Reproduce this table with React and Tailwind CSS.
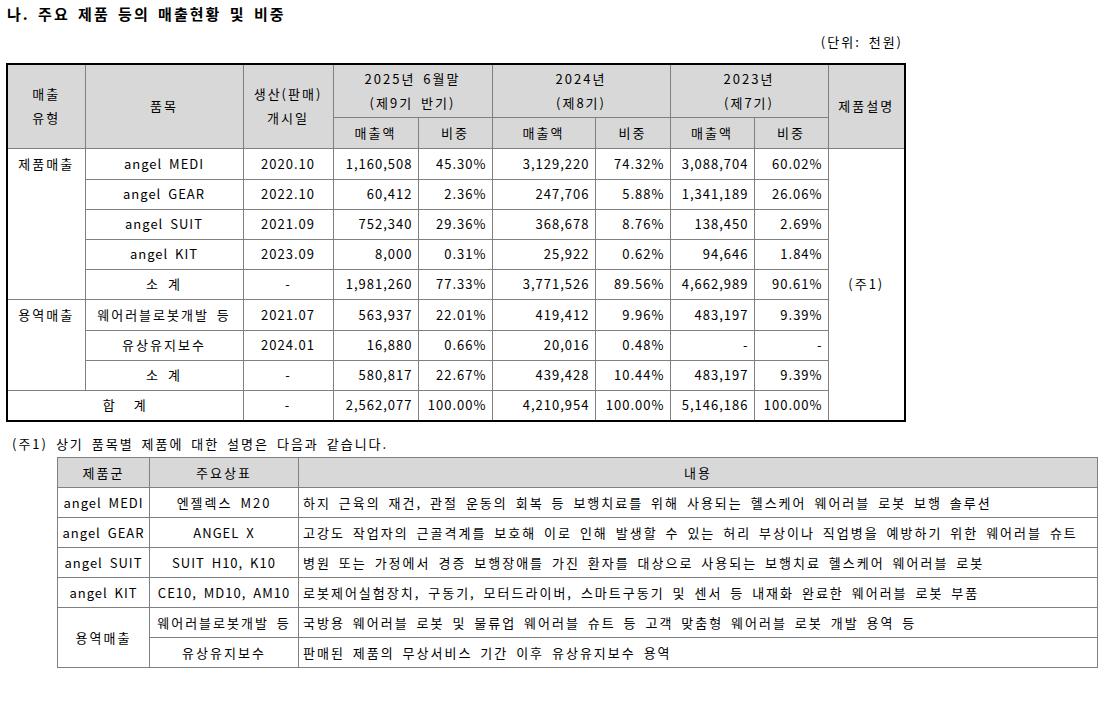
const th = 'border border-[#808080] bg-[#d8d8d8] font-normal text-center align-middle'
const td = 'border border-[#808080] align-middle'
const num = `${td} text-right pr-[5px] tracking-[1px]`
const mid = `${td} text-center`
const lat = `${td} text-center tracking-[1px]`

const rows = [
  { item: 'angel MEDI', date: '2020.10', v: ['1,160,508', '45.30%', '3,129,220', '74.32%', '3,088,704', '60.02%'] },
  { item: 'angel GEAR', date: '2022.10', v: ['60,412', '2.36%', '247,706', '5.88%', '1,341,189', '26.06%'] },
  { item: 'angel SUIT', date: '2021.09', v: ['752,340', '29.36%', '368,678', '8.76%', '138,450', '2.69%'] },
  { item: 'angel KIT', date: '2023.09', v: ['8,000', '0.31%', '25,922', '0.62%', '94,646', '1.84%'] },
  { item: '소 계', date: '-', v: ['1,981,260', '77.33%', '3,771,526', '89.56%', '4,662,989', '90.61%'], sum: true },
]

const service = [
  { item: '웨어러블로봇개발 등', date: '2021.07', v: ['563,937', '22.01%', '419,412', '9.96%', '483,197', '9.39%'] },
  { item: '유상유지보수', date: '2024.01', v: ['16,880', '0.66%', '20,016', '0.48%', '-', '-'] },
  { item: '소 계', date: '-', v: ['580,817', '22.67%', '439,428', '10.44%', '483,197', '9.39%'], sum: true },
]

const products = [
  ['angel MEDI', '엔젤렉스 M20', '하지 근육의 재건, 관절 운동의 회복 등 보행치료를 위해 사용되는 헬스케어 웨어러블 로봇 보행 솔루션'],
  ['angel GEAR', 'ANGEL X', '고강도 작업자의 근골격계를 보호해 이로 인해 발생할 수 있는 허리 부상이나 직업병을 예방하기 위한 웨어러블 슈트'],
  ['angel SUIT', 'SUIT H10, K10', '병원 또는 가정에서 경증 보행장애를 가진 환자를 대상으로 사용되는 보행치료 헬스케어 웨어러블 로봇'],
  ['angel KIT', 'CE10, MD10, AM10', '로봇제어실험장치, 구동기, 모터드라이버, 스마트구동기 및 센서 등 내재화 완료한 웨어러블 로봇 부품'],
]

const Cells = ({ v }) =>
  v.map((x, i) => (
    <td key={i} className={num}>{x}</td>
  ))

// 한글 위주 셀은 자간 2px, 숫자·영문 셀은 1px
const isLatin = (s) => /^[A-Za-z0-9 ,.]+$/.test(s)

export default function App() {
  return (
    <div className="min-h-[704px] bg-white text-black text-[13px] leading-[18px] tracking-[2px] [word-spacing:3px] font-['Noto_Sans_CJK_KR',sans-serif]">
      <h2 className="pl-[7px] pt-[4px] h-[30px] text-[15px] font-bold leading-[20px]">
        나. 주요 제품 등의 매출현황 및 비중
      </h2>

      <div className="w-[898px] ml-[6px]">
        <p className="text-right h-[33px] pt-[3px] pr-[1px]">(단위: 천원)</p>

        <table className="w-[898px] table-fixed border-collapse border-2 border-black">
          <colgroup>
            <col className="w-[78px]" />
            <col className="w-[158px]" />
            <col className="w-[90px]" />
            <col className="w-[85px]" />
            <col className="w-[74px]" />
            <col className="w-[103px]" />
            <col className="w-[75px]" />
            <col className="w-[84px]" />
            <col className="w-[74px]" />
            <col className="w-[77px]" />
          </colgroup>
          <thead>
            <tr className="h-[53px] leading-[24px]">
              <th rowSpan={2} className={th}>매출<br />유형</th>
              <th rowSpan={2} className={th}>품목</th>
              <th rowSpan={2} className={th}>생산(판매)<br />개시일</th>
              <th colSpan={2} className={th}>2025년 6월말<br />(제9기 반기)</th>
              <th colSpan={2} className={th}>2024년<br />(제8기)</th>
              <th colSpan={2} className={th}>2023년<br />(제7기)</th>
              <th rowSpan={2} className={th}>제품설명</th>
            </tr>
            <tr className="h-[31px]">
              <th className={th}>매출액</th>
              <th className={th}>비중</th>
              <th className={th}>매출액</th>
              <th className={th}>비중</th>
              <th className={th}>매출액</th>
              <th className={th}>비중</th>
            </tr>
          </thead>
          <tbody>
            {rows.map((r, i) => (
              <tr key={r.item + i} className={i === 0 ? 'h-[31px]' : 'h-[30px]'}>
                {i === 0 && (
                  <td rowSpan={5} className={`${td} align-top text-center pt-[6px]`}>제품매출</td>
                )}
                <td className={r.sum ? mid : lat}>{r.item}</td>
                <td className={lat}>{r.date}</td>
                <Cells v={r.v} />
                {i === 0 && (
                  <td rowSpan={9} className={mid}>(주1)</td>
                )}
              </tr>
            ))}
            {service.map((r, i) => (
              <tr key={r.item + i} className={i === 0 ? 'h-[31px]' : 'h-[30px]'}>
                {i === 0 && (
                  <td rowSpan={3} className={`${td} align-top text-center pt-[6px]`}>용역매출</td>
                )}
                <td className={mid}>{r.item}</td>
                <td className={lat}>{r.date}</td>
                <Cells v={r.v} />
              </tr>
            ))}
            <tr className="h-[31px]">
              <td colSpan={2} className={`${mid} [word-spacing:12px]`}>합 계</td>
              <td className={mid}>-</td>
              <Cells v={['2,562,077', '100.00%', '4,210,954', '100.00%', '5,146,186', '100.00%']} />
            </tr>
          </tbody>
        </table>
      </div>

      <p className="pl-[12px] pt-[13px] h-[35px]">(주1) 상기 품목별 제품에 대한 설명은 다음과 같습니다.</p>

      <table className="ml-[57px] w-[1040px] table-fixed border-collapse border border-black">
        <colgroup>
          <col className="w-[92px]" />
          <col className="w-[149px]" />
          <col className="w-[799px]" />
        </colgroup>
        <thead>
          <tr className="h-[30px]">
            <th className={th}>제품군</th>
            <th className={th}>주요상표</th>
            <th className={th}>내용</th>
          </tr>
        </thead>
        <tbody>
          {products.map(([a, b, c]) => (
            <tr key={a} className="h-[30px]">
              <td className={lat}>{a}</td>
              <td className={isLatin(b) ? lat : mid}>{b}</td>
              <td className={`${td} pl-[4px]`}>{c}</td>
            </tr>
          ))}
          <tr className="h-[30px]">
            <td rowSpan={2} className={mid}>용역매출</td>
            <td className={mid}>웨어러블로봇개발 등</td>
            <td className={`${td} pl-[4px]`}>국방용 웨어러블 로봇 및 물류업 웨어러블 슈트 등 고객 맞춤형 웨어러블 로봇 개발 용역 등</td>
          </tr>
          <tr className="h-[30px]">
            <td className={mid}>유상유지보수</td>
            <td className={`${td} pl-[4px]`}>판매된 제품의 무상서비스 기간 이후 유상유지보수 용역</td>
          </tr>
        </tbody>
      </table>
    </div>
  )
}
